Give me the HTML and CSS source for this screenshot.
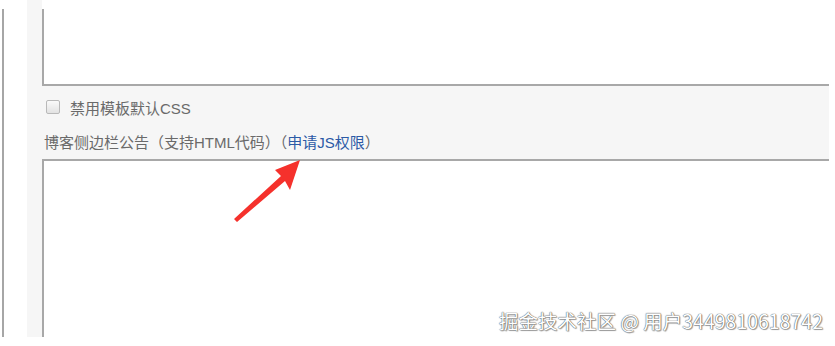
FILE: index.html
```html
<!DOCTYPE html>
<html lang="zh-CN">
<head>
<meta charset="utf-8">
<title>博客设置</title>
<link rel="stylesheet" href="styles.css">
</head>
<body>
<div class="frame">
  <div class="rule"></div>
  <div class="panel">
    <div class="editor editor-top"></div>
    <label class="option">
      <input type="checkbox" class="check">
      <span>禁用模板默认CSS</span>
    </label>
    <div class="field-label">博客侧边栏公告（支持HTML代码）（<a class="link" href="#">申请JS权限</a>）</div>
    <div class="editor editor-bottom"></div>
  </div>
</div>
<svg class="arrow" width="80" height="75" viewBox="0 0 80 75" aria-hidden="true">
  <polygon points="71,2 61,32 56,23 8,64 5,61 52,18 46,12" fill="#f5312c"/>
</svg>
<div class="watermark">掘金技术社区 @ 用户3449810618742</div>
</body>
</html>
```
FILE: styles.css
```css
html, body {
  margin: 0;
  padding: 0;
  background: #ffffff;
}
body {
  width: 835px;
  height: 346px;
  overflow: hidden;
  position: relative;
  font-family: "Liberation Sans", "Noto Sans CJK SC", sans-serif;
  font-size: 15px;
  color: #6a6a6a;
}
.frame {
  display: flex;
  height: 337px;
}
.rule {
  width: 2px;
  margin-left: 2px;
  margin-top: 9px;
  background: #a6a6a6;
}
.panel {
  margin-left: 23px;
  width: 787px;
  padding: 0 0 0 15px;
  background: #f6f6f6;
  display: flex;
  flex-direction: column;
  overflow: hidden;
}
.editor {
  width: 820px;
  background: #ffffff;
  border-left: 2px solid #a8a8a8;
}
.editor-top {
  height: 84px;
  border-left: none;
  padding-left: 2px;
  border-bottom: 2px solid #a8a8a8;
  background: linear-gradient(#a8a8a8, #a8a8a8) 0 9px / 2px 100% no-repeat, #ffffff;
}
.option {
  display: flex;
  align-items: center;
  height: 26px;
  margin-top: 8px;
  padding-left: 4px;
  gap: 10px;
}
.check {
  appearance: none;
  -webkit-appearance: none;
  margin: 0;
  width: 14px;
  height: 14px;
  border: 1px solid #b9b9b9;
  border-radius: 2px;
  background: linear-gradient(#fafafa, #e2e2e2);
  box-sizing: border-box;
}
.field-label {
  height: 26px;
  line-height: 26px;
  margin-top: 10px;
  padding-left: 2px;
}
.link {
  color: #2c5aa6;
  text-decoration: none;
}
.editor-bottom {
  margin-top: 3px;
  flex: 1;
  border-top: 2px solid #a8a8a8;
}
.arrow {
  position: absolute;
  left: 229px;
  top: 158px;
}
.watermark {
  position: absolute;
  right: 12px;
  top: 309px;
  font-family: "Noto Sans CJK SC", sans-serif;
  font-size: 19.5px;
  line-height: 24px;
  color: #ffffff;
  text-shadow: 0 0 1px #555, 0 0 1px #555, 1px 1px 1px rgba(0,0,0,0.35);
}
```
